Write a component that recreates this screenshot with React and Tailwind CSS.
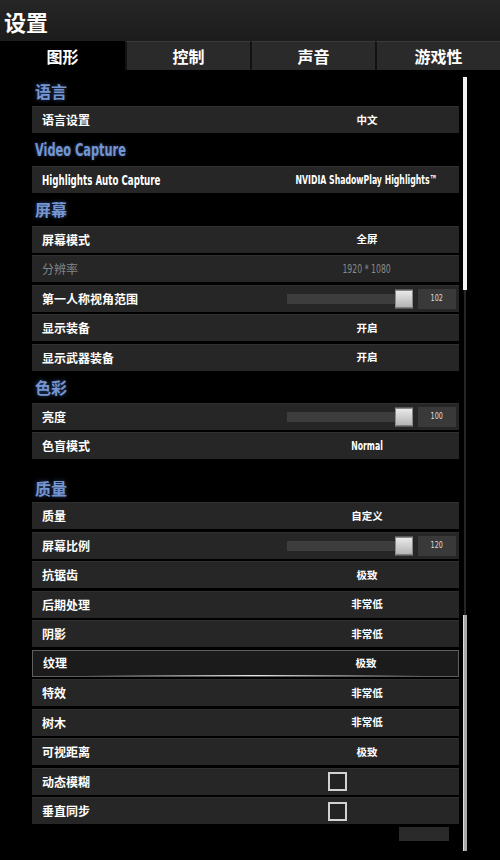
const narrow = "font-['DejaVu_Sans_Condensed','Noto_Sans_CJK_SC',sans-serif]";

const tabs = ["图形", "控制", "声音", "游戏性"];

function SectionTitle({ children, className = "", condensed }) {
  return (
    <div className={`flex pl-[3px] text-[16px] font-bold leading-[20px] text-[#7495d1] [text-shadow:0_0_4px_rgba(90,130,210,0.55)] ${className}`}>
      {condensed ? (
        <span className={`inline-block origin-left scale-x-[0.7] whitespace-nowrap text-[18px] ${narrow}`}>{children}</span>
      ) : (
        <span>{children}</span>
      )}
    </div>
  );
}

function Slider({ value }) {
  return (
    <div className="flex w-full items-center pl-[12px] pr-[3px]">
      <div className="relative h-[10px] flex-1 bg-[#3d3d3d]">
        <div className="absolute right-0 top-1/2 h-[19px] w-[18px] -translate-y-1/2 border border-[#8a8a8a] bg-linear-to-b from-[#ebebeb] to-[#b3b3b3]" />
      </div>
      <div className={`ml-[5px] flex h-[20px] w-[38px] items-center justify-center bg-[#393939] text-[9px] leading-none text-[#dcdcdc] ${narrow}`}>
        <span className="inline-block scale-x-[0.8]">{value}</span>
      </div>
    </div>
  );
}

function Row({ label, value, dim, slider, check, active, latinLabel, latinValue }) {
  let cell;
  if (slider) cell = <Slider value={slider} />;
  else if (check)
    cell = (
      <div className="flex w-full">
        <div className="ml-[53px] size-[19px] border-2 border-[#d2d2d2] bg-[#232323]" />
      </div>
    );
  else
    cell = (
      <div className="flex w-full items-center justify-center leading-none">
        {latinValue ? (
          <span
            className={`inline-block scale-x-[0.72] whitespace-nowrap text-[12px] ${narrow} ${dim ? "font-normal text-[#8a8a8a]" : "font-bold text-white"}`}
          >
            {value}
          </span>
        ) : (
          <span className={`text-[10.5px] ${dim ? "font-normal text-[#8a8a8a]" : "font-bold text-white"}`}>{value}</span>
        )}
      </div>
    );

  return (
    <div
      className={`relative flex h-[27px] items-center ${active ? "border border-[#5e5e5e] bg-[#1b1b1b]" : "border-t border-[#2f2f2f] bg-[#262626]"}`}
    >
      <div className="flex flex-1 items-center pl-[10px] leading-none">
        {latinLabel ? (
          <span className={`inline-block origin-left scale-x-[0.69] whitespace-nowrap text-[14px] font-bold text-white ${narrow}`}>
            {label}
          </span>
        ) : (
          <span className={`text-[12px] ${dim ? "font-normal text-[#858585]" : "font-bold text-white"}`}>{label}</span>
        )}
      </div>
      <div className="flex w-[184px] items-center">{cell}</div>
      {active && (
        <div className="absolute bottom-0 left-[12%] right-[8%] h-px bg-linear-to-r from-transparent via-[#e8e8e8] to-transparent" />
      )}
    </div>
  );
}

function Rows({ children }) {
  return <div className="flex flex-col gap-[2.5px]">{children}</div>;
}

function Scrollbar() {
  return (
    <div className="ml-[4px] flex w-[4px] flex-col pt-[7px]">
      <div className="h-[213px] w-[4px] bg-[#f2f2f2]" />
      <div className="mx-auto h-[325px] w-[2px] bg-[#262626]" />
      <div className="h-[236px] w-[4px] border-l border-[#dcdcdc] bg-[#a9a9a9]" />
    </div>
  );
}

export default function App() {
  return (
    <div className="h-[860px] w-[500px] overflow-hidden bg-black font-['Noto_Sans_CJK_SC',sans-serif] text-white">
      <div className="flex h-[41px] items-center bg-linear-to-b from-[#262626] to-[#1c1c1c] pl-[4px] text-[22px] font-bold leading-none">
        设置
      </div>

      <div className="grid h-[29px] grid-cols-4 text-[16px] font-bold">
        {tabs.map((t, i) => (
          <div
            key={t}
            className={
              i === 0
                ? "flex items-center justify-center bg-black"
                : "flex items-center justify-center border-l-2 border-t border-l-[#121212] border-t-[#3a3a3a] bg-[#2a2a2a]"
            }
          >
            {t}
          </div>
        ))}
      </div>

      <div className="flex">
        <div className="ml-[32px] flex w-[427px] flex-col">
          <SectionTitle className="h-[36px] items-end pb-[5px]">语言</SectionTitle>
          <Rows>
            <Row label="语言设置" value="中文" />
          </Rows>

          <SectionTitle className="h-[33px] items-center" condensed>
            Video Capture
          </SectionTitle>
          <Rows>
            <Row label="Highlights Auto Capture" value="NVIDIA ShadowPlay Highlights™" latinLabel latinValue />
          </Rows>

          <SectionTitle className="h-[32.5px] items-center">屏幕</SectionTitle>
          <Rows>
            <Row label="屏幕模式" value="全屏" />
            <Row label="分辨率" value="1920 * 1080" dim latinValue />
            <Row label="第一人称视角范围" slider="102" />
            <Row label="显示装备" value="开启" />
            <Row label="显示武器装备" value="开启" />
          </Rows>

          <SectionTitle className="h-[32px] items-center">色彩</SectionTitle>
          <Rows>
            <Row label="亮度" slider="100" />
            <Row label="色盲模式" value="Normal" latinValue />
          </Rows>

          <SectionTitle className="h-[43px] items-end pb-[4px]">质量</SectionTitle>
          <Rows>
            <Row label="质量" value="自定义" />
            <Row label="屏幕比例" slider="120" />
            <Row label="抗锯齿" value="极致" />
            <Row label="后期处理" value="非常低" />
            <Row label="阴影" value="非常低" />
            <Row label="纹理" value="极致" active />
            <Row label="特效" value="非常低" />
            <Row label="树木" value="非常低" />
            <Row label="可视距离" value="极致" />
            <Row label="动态模糊" check />
            <Row label="垂直同步" check />
            <div className="flex h-[20px] items-start justify-end">
              <div className="mr-[10px] h-[14px] w-[50px] bg-[#2a2a2a]" />
            </div>
          </Rows>
        </div>
        <Scrollbar />
      </div>
    </div>
  );
}
